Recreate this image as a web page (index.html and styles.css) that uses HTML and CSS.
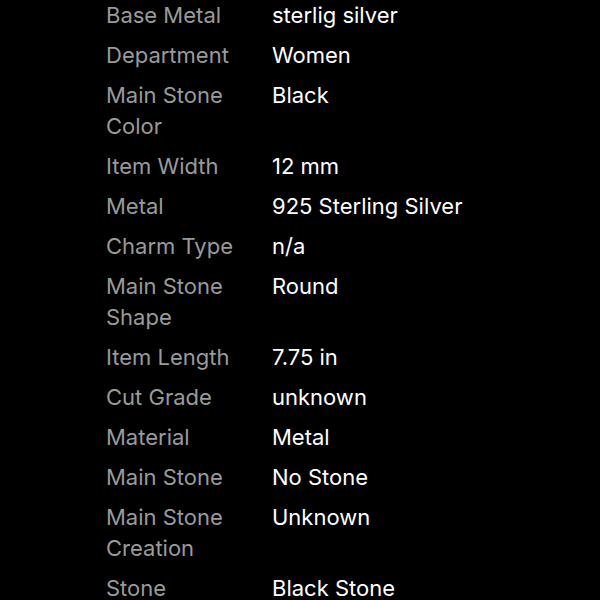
FILE: index.html
```html
<!DOCTYPE html>
<html>
<head>
<meta charset="utf-8">
<link rel="stylesheet" href="styles.css">
</head>
<body>
<dl class="specs">
  <div class="row"><dt>Base Metal</dt><dd>sterlig silver</dd></div>
  <div class="row"><dt>Department</dt><dd>Women</dd></div>
  <div class="row"><dt>Main Stone Color</dt><dd>Black</dd></div>
  <div class="row"><dt>Item Width</dt><dd>12 mm</dd></div>
  <div class="row"><dt>Metal</dt><dd>925 Sterling Silver</dd></div>
  <div class="row"><dt>Charm Type</dt><dd>n/a</dd></div>
  <div class="row"><dt>Main Stone Shape</dt><dd>Round</dd></div>
  <div class="row"><dt>Item Length</dt><dd>7.75 in</dd></div>
  <div class="row"><dt>Cut Grade</dt><dd>unknown</dd></div>
  <div class="row"><dt>Material</dt><dd>Metal</dd></div>
  <div class="row"><dt>Main Stone</dt><dd>No Stone</dd></div>
  <div class="row"><dt>Main Stone Creation</dt><dd>Unknown</dd></div>
  <div class="row"><dt>Stone</dt><dd>Black Stone</dd></div>
</dl>
</body>
</html>
```
FILE: styles.css
```css
html, body {
  margin: 0;
  padding: 0;
  background: #000;
  height: 600px;
  overflow: hidden;
}
.specs {
  margin: 0;
  padding: 0 0 0 106px;
  display: flex;
  flex-direction: column;
  gap: 9px;
  font-family: Inter, "Liberation Sans", sans-serif;
  font-size: 22px;
  line-height: 31px;
}
.row {
  display: grid;
  grid-template-columns: 150px 1fr;
  column-gap: 16px;
}
dt {
  color: #9a9a9a;
  margin: 0;
}
dd {
  color: #fff;
  margin: 0;
}
```
